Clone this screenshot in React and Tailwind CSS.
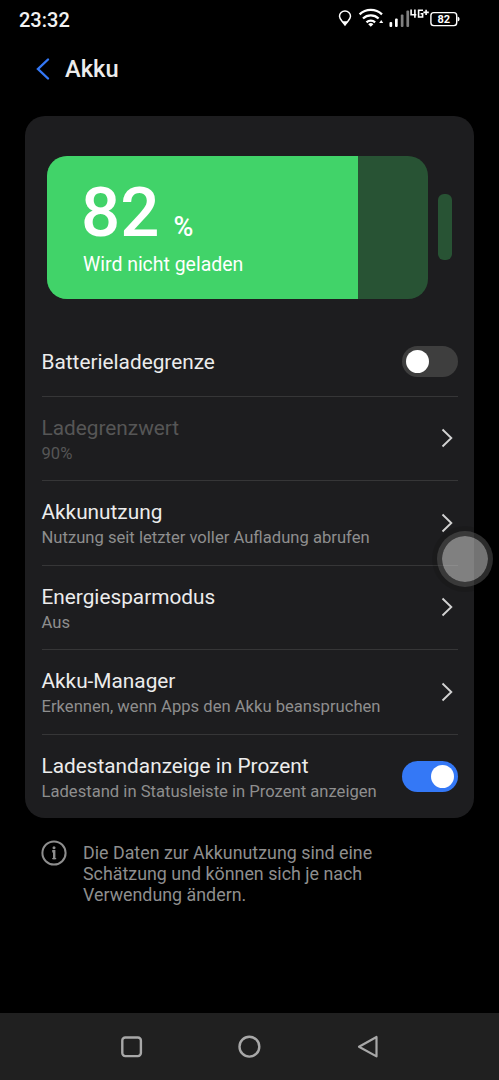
import React, { useState } from "react";
import clsx from "clsx";

const LEVEL = 82;

function StatusBar() {
  return (
    <div className="h-[38px] pl-[19px] pr-[38px] flex items-center justify-between">
      <span className="text-[20px] font-medium leading-none text-[#f2f2f2] pt-px">23:32</span>
      <svg width="124" height="24" viewBox="0 0 124 24">
        {/* location */}
        <path
          d="M8 3.9a5.4 5.4 0 0 1 5.5 5.4c0 3-2.6 4.6-5.5 8.6-2.9-4-5.5-5.6-5.5-8.6A5.4 5.4 0 0 1 8 3.9z"
          fill="none"
          stroke="#fff"
          strokeWidth="1.5"
        />
        <path d="M5 14.3h6L8 18.8z" fill="#fff" />
        {/* wifi */}
        <g fill="none" stroke="#fff" strokeWidth="2.3">
          <path d="M22.6 7.4a16.2 16.2 0 0 1 22.4 0" />
          <path d="M26 11.5a11.3 11.3 0 0 1 15.6 0" />
          <path d="M29.5 15.3a6.3 6.3 0 0 1 8.6 0" />
        </g>
        <path d="M31.2 17.2a3.8 3.8 0 0 1 5.2 0L33.8 19.7z" fill="#fff" />
        <path d="M42.2 16l2-3 2 3z" fill="#fff" />
        {/* signal */}
        <rect x="52.5" y="15" width="2.7" height="5" rx="1" fill="#fff" />
        <rect x="58" y="11.5" width="2.7" height="8.5" rx="1" fill="#fff" />
        <rect x="63.8" y="7.5" width="2.7" height="12.5" rx="1" fill="#808080" />
        <rect x="69.4" y="3.5" width="2.7" height="16.5" rx="1" fill="#808080" />
        {/* 4G+ */}
        <g fill="none" stroke="#fff" strokeWidth="1.6">
          <path d="M74.1 2.6v5.2h5.2M77.9 2.6v8.2" />
          <path d="M86 3.2h-4.4v6.8h4V6.8h-2" />
          <path d="M86.4 5.4h5.4M89.1 2.7v5.4" />
        </g>
        {/* battery */}
        <rect x="93.9" y="5.6" width="25.8" height="13" rx="2.8" fill="none" stroke="#fff" strokeWidth="1.4" />
        <path d="M120.6 9.6q2 .5 2 2.5t-2 2.5z" fill="#fff" />
        <text x="106.7" y="16.1" textAnchor="middle" fontSize="11" fontWeight="700" fill="#fff">
          {LEVEL}
        </text>
      </svg>
    </div>
  );
}

function BatteryCard() {
  return (
    <div className="h-[210.5px] pt-[39.5px] pl-[22px] flex items-start gap-[10px]">
      <div className="w-[381px] h-[143px] rounded-[20px] overflow-hidden bg-[#285334]">
        <div
          className="h-full bg-[#41d369] pl-[36px] flex flex-col text-white whitespace-nowrap"
          style={{ width: `${LEVEL - 0.3}%` }}
        >
          <div className="h-[97.5px] pt-[17.5px] -ml-[2px] flex items-baseline leading-[80px]">
            <span className="text-[69px] font-medium">{LEVEL}</span>
            <span className="text-[27px] font-medium ml-[14px]">%</span>
          </div>
          <span className="text-[19.45px] leading-[24px]">Wird nicht geladen</span>
        </div>
      </div>
      <div className="w-[14px] h-[66px] mt-[38.5px] rounded-[6px] bg-[#285334]" />
    </div>
  );
}

function Toggle({ checked, onChange }) {
  return (
    <button
      type="button"
      role="switch"
      aria-checked={checked}
      onClick={() => onChange(!checked)}
      className={clsx(
        "w-[55.5px] h-[31px] rounded-full flex items-center px-[4px] shrink-0",
        checked ? "bg-[#3478f6] justify-end" : "bg-[#3e3e3e] justify-start"
      )}
    >
      <span className="size-[23px] rounded-full bg-white" />
    </button>
  );
}

function Chevron() {
  return (
    <svg width="12" height="20" viewBox="0 0 12 20" className="mr-[4.5px] shrink-0">
      <path d="M1.5 1.5l8.8 8.5-8.8 8.5" fill="none" stroke="#d2d2d2" strokeWidth="1.9" />
    </svg>
  );
}

function Row({ title, sub, disabled, first, children }) {
  return (
    <div
      className={clsx(
        "mx-[16.5px] flex items-center justify-between",
        first ? "h-[69px]" : "h-[84.5px] border-t border-[#363637]"
      )}
    >
      <div className={clsx("flex flex-col whitespace-nowrap", sub ? "pt-[3px]" : "pt-px")}>
        <span className={clsx("text-[20.8px] leading-[28px]", disabled ? "text-[#565656]" : "text-[#ececec]")}>
          {title}
        </span>
        {sub && (
          <span className={clsx("text-[16.62px] leading-[24px]", disabled ? "text-[#565656]" : "text-[#8e8e8e]")}>
            {sub}
          </span>
        )}
      </div>
      {children}
    </div>
  );
}

export default function App() {
  const [limit, setLimit] = useState(false);
  const [percent, setPercent] = useState(true);

  return (
    <div className="relative w-[499px] h-[1080px] bg-black flex flex-col overflow-hidden font-[Roboto,sans-serif]">
      <StatusBar />

      <header className="h-[78px] pl-[35px] pb-[16px] flex items-center">
        <svg width="16" height="24" viewBox="0 0 16 24">
          <path d="M13 2.5L3 12l10 9.5" fill="none" stroke="#3478f6" strokeWidth="2.4" strokeLinecap="round" />
        </svg>
        <h1 className="ml-[14px] pt-[2px] text-[23.7px] font-medium text-[#ececec]">Akku</h1>
      </header>

      <main className="mx-[25px] h-[702px] rounded-[20px] bg-[#1d1d1f]">
        <BatteryCard />
        <Row title="Batterieladegrenze" first>
          <Toggle checked={limit} onChange={setLimit} />
        </Row>
        <Row title="Ladegrenzwert" sub="90%" disabled>
          <Chevron />
        </Row>
        <Row title="Akkunutzung" sub="Nutzung seit letzter voller Aufladung abrufen">
          <Chevron />
        </Row>
        <Row title="Energiesparmodus" sub="Aus">
          <Chevron />
        </Row>
        <Row title="Akku-Manager" sub="Erkennen, wenn Apps den Akku beanspruchen">
          <Chevron />
        </Row>
        <Row title="Ladestandanzeige in Prozent" sub="Ladestand in Statusleiste in Prozent anzeigen">
          <Toggle checked={percent} onChange={setPercent} />
        </Row>
      </main>

      <div className="pl-[41px] pt-[22px] flex items-start text-[#8e8e8e]">
        <svg width="26" height="26" viewBox="0 0 26 26">
          <circle cx="13" cy="13" r="11.6" fill="none" stroke="currentColor" strokeWidth="2" />
          <circle cx="13" cy="7.8" r="1.5" fill="currentColor" />
          <path d="M11.2 11.2H13.2v8" fill="none" stroke="currentColor" strokeWidth="2.4" />
          <path d="M11.2 18.6h4" fill="none" stroke="currentColor" strokeWidth="1.2" />
        </svg>
        <p className="ml-[16px] mt-[3px] text-[17.85px] leading-[20.8px] whitespace-nowrap">
          Die Daten zur Akkunutzung sind eine
          <br />
          Schätzung und können sich je nach
          <br />
          Verwendung ändern.
        </p>
      </div>

      <nav className="mt-auto h-[67px] bg-[#202020] pl-[120px] pr-[119px] flex items-center justify-between">
        <svg width="24" height="24" viewBox="0 0 24 24">
          <rect x="2.3" y="2.5" width="18.6" height="18.6" rx="3" fill="none" stroke="#a8a8a8" strokeWidth="2.4" />
        </svg>
        <svg width="24" height="24" viewBox="0 0 24 24">
          <circle cx="11.4" cy="11.7" r="9.9" fill="none" stroke="#a8a8a8" strokeWidth="2.4" />
        </svg>
        <svg width="24" height="24" viewBox="0 0 24 24">
          <path d="M20.5 2v19.4L3 11.7z" fill="none" stroke="#a8a8a8" strokeWidth="2.2" strokeLinejoin="round" />
        </svg>
      </nav>

      {/* floating assistive button */}
      <div className="absolute left-[432px] top-[526px] size-[66px] rounded-full bg-black/10 flex items-center justify-center">
        <div className="size-[56px] shrink-0 rounded-full border-[5px] border-[#5f5f5f]/45 bg-[#e5e5e5]/50 bg-clip-padding" />
      </div>
    </div>
  );
}
